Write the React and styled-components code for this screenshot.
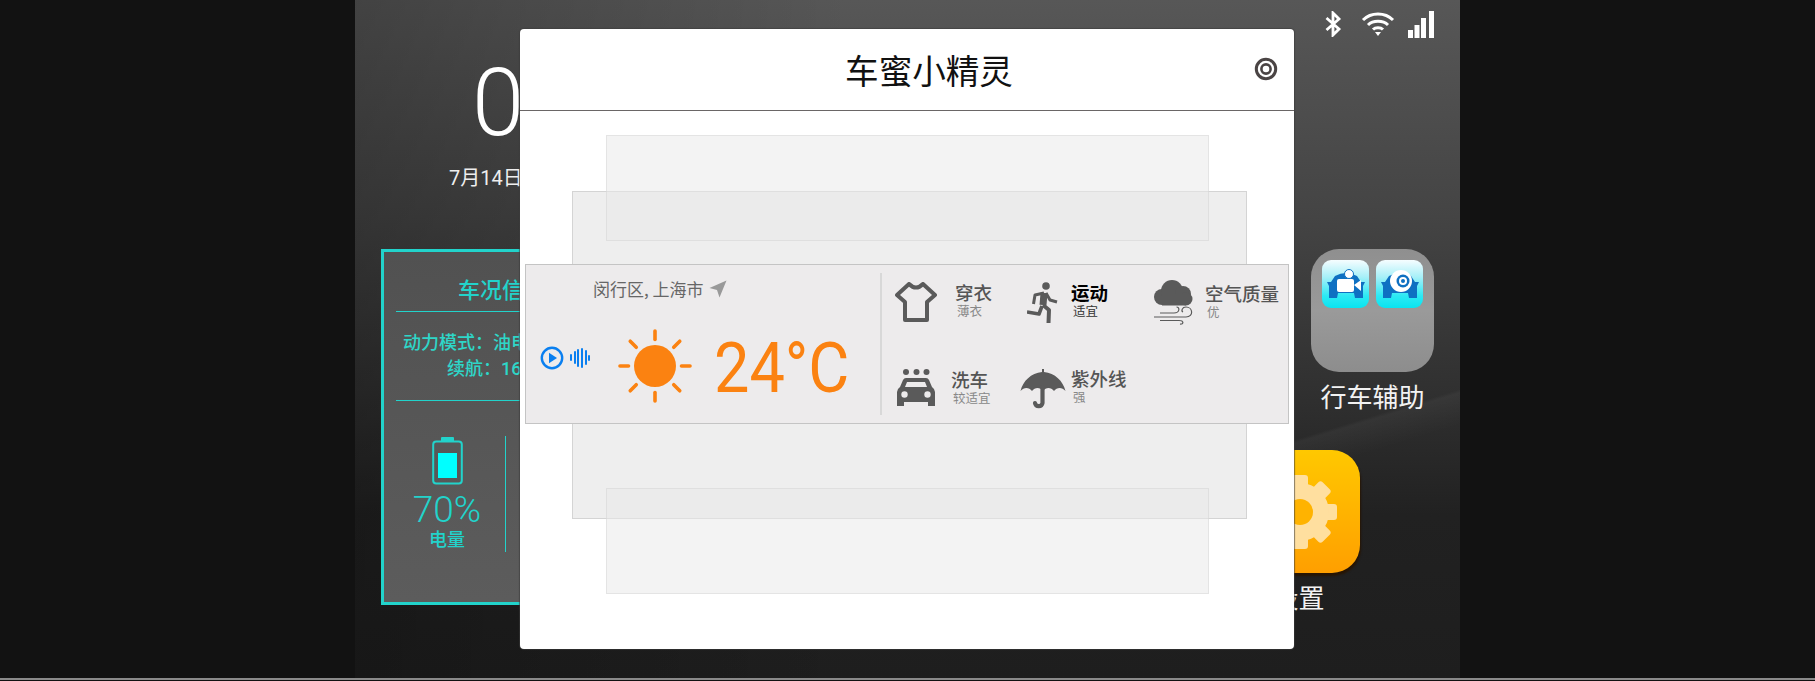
import React from 'react'
import styled, { createGlobalStyle } from 'styled-components'

const CJK = '"Noto Sans CJK SC", "Noto Sans", sans-serif'
const TEAL = '#22d3cb'
const ORANGE = '#fb8211'
const BLUE = '#0a7ff0'
const ICON_GRAY = '#5a5a5a'

const GlobalStyle = createGlobalStyle`
  html, body {
    margin: 0;
    height: 681px;
    overflow: hidden;
    background: #121212;
    font-family: Roboto, ${CJK};
  }
`

const Page = styled.div`
  width: 1815px;
  height: 681px;
  display: flex;
  flex-direction: column;
  align-items: center;
`

const BottomLine = styled.div`
  width: 100%;
  height: 2px;
  background: #8a8a8a;
`

const Phone = styled.div`
  position: relative;
  width: 1105px;
  height: 678px;
  flex-shrink: 0;
  display: flex;
  flex-direction: column;
  overflow: hidden;
  background:
    linear-gradient(163deg, transparent 50%, rgba(255, 255, 255, 0.04) 52%, transparent 70%) right 390px / 300px 90px no-repeat,
    linear-gradient(90deg, rgba(0, 0, 0, 0.24) 0, rgba(0, 0, 0, 0) 45%),
    linear-gradient(180deg, #575757 0, #444 32%, #303030 58%, #212121 76%, #1e1e1e 100%);
`

const StatusBar = styled.div`
  height: 45px;
  flex-shrink: 0;
  display: flex;
  justify-content: flex-end;
  align-items: flex-start;
  gap: 13px;
  padding: 11px 25px 0 0;
  box-sizing: border-box;
`

const Home = styled.div`
  flex: 1;
  display: flex;
  justify-content: space-between;
  padding: 0 26px 0 26px;
`

const LeftColumn = styled.div`
  display: flex;
  flex-direction: column;
  width: 300px;
`

const Clock = styled.div`
  margin: 5px 0 0 91px;
  font-size: 94px;
  line-height: 106px;
  font-weight: 300;
  color: #fff;
  white-space: nowrap;
`

const DateText = styled.div`
  margin: 9px 0 0 68px;
  font-size: 20px;
  line-height: 26px;
  color: #eee;
  white-space: nowrap;
`

const StatusPanel = styled.div`
  margin-top: 58px;
  width: 242px;
  height: 356px;
  box-sizing: border-box;
  border: 3px solid ${TEAL};
  background: linear-gradient(180deg, #515151 0, #5c5c5c 100%);
  color: ${TEAL};
  display: flex;
  flex-direction: column;
  padding: 0 12px;
`

const PanelTitle = styled.div`
  padding-top: 19px;
  font-size: 22px;
  line-height: 40px;
  font-weight: 500;
  text-align: center;
  border-bottom: 1.5px solid ${TEAL};
`

const PanelText = styled.div`
  padding-top: 18px;
  height: 70px;
  border-bottom: 1.5px solid ${TEAL};
  font-size: 18px;
  line-height: 26px;
  font-weight: 500;
  text-align: center;
  white-space: nowrap;
  color: #2ed6c8;
`

const Stats = styled.div`
  margin-top: 35px;
  display: flex;
`

const Stat = styled.div`
  width: 110px;
  height: 116px;
  box-sizing: border-box;
  padding-right: 7px;
  border-right: 1.5px solid ${TEAL};
  display: flex;
  flex-direction: column;
  align-items: center;
`

const StatValue = styled.div`
  margin-top: 7px;
  font-size: 37px;
  line-height: 36px;
  font-weight: 300;
`

const StatLabel = styled.div`
  font-size: 18px;
  line-height: 24px;
  font-weight: 500;
`

const RightColumn = styled.div`
  padding-top: 204px;
  display: flex;
  flex-direction: column;
  align-items: flex-end;
`

const AppCell = styled.div`
  width: 123px;
  margin-right: ${p => p.$shift || 0}px;
  margin-top: ${p => p.$top || 0}px;
  display: flex;
  flex-direction: column;
  align-items: center;
`

const AppLabel = styled.div`
  margin-top: 9px;
  font-size: 26px;
  line-height: 34px;
  color: #f2f2f2;
  white-space: nowrap;
`

const Folder = styled.div`
  width: 123px;
  height: 123px;
  box-sizing: border-box;
  padding: 11px;
  border-radius: 28px;
  background: linear-gradient(180deg, #8f8f8f 0, #9a9a9a 50%, #8d8d8d 100%);
  display: flex;
  gap: 7px;
  align-items: flex-start;
`

const MiniApp = styled.div`
  width: 47px;
  height: 48px;
  border-radius: 9px;
  background: linear-gradient(180deg, #f6fdff 0, #a8f0f8 35%, #2ce9f4 75%, #09e4f0 100%);
  display: flex;
  align-items: center;
  justify-content: center;
`

const SettingsIcon = styled.div`
  width: 123px;
  height: 123px;
  border-radius: 28px;
  background: linear-gradient(180deg, #ffc800 0, #ff9f00 100%);
  box-shadow: 1px 3px 2px rgba(40, 20, 0, 0.9);
  display: flex;
  align-items: center;
  justify-content: center;
  padding-left: 2px;
  box-sizing: border-box;
`

const Modal = styled.div`
  position: absolute;
  top: 29px;
  left: 165px;
  width: 774px;
  height: 620px;
  box-sizing: border-box;
  background: #fff;
  border-radius: 4px;
  box-shadow: 0 0 1px 1px rgba(60, 60, 60, 0.6);
  display: flex;
  flex-direction: column;
`

const ModalHeader = styled.div`
  height: 82px;
  flex-shrink: 0;
  box-sizing: border-box;
  padding-left: 44px;
  border-bottom: 1px solid #6a6666;
  display: flex;
  align-items: center;
  justify-content: center;
  position: relative;
`

const ModalTitle = styled.div`
  font-family: ${CJK};
  font-size: 33.6px;
  color: #111;
`

const HeaderAction = styled.div`
  position: absolute;
  right: 16px;
  top: 28px;
  display: flex;
`

const CardStack = styled.div`
  flex: 1;
  padding: 24px 0 55px;
  display: grid;
  grid-template: 1fr / 1fr;
`

const BackCard = styled.div`
  grid-area: 1 / 1;
  justify-self: center;
  align-self: start;
  width: 675px;
  height: 328px;
  margin: 56px 0 0 5px;
  box-sizing: border-box;
  background: #eeeeee;
  border: 1.5px solid #d4d4d4;
`

const GhostCard = styled.div`
  grid-area: 1 / 1;
  justify-self: center;
  align-self: ${p => p.$align};
  width: 603px;
  height: 106px;
  box-sizing: border-box;
  background: rgba(232, 232, 232, 0.53);
  border: 1.5px solid rgba(205, 205, 205, 0.4);
`

const WeatherCard = styled.div`
  grid-area: 1 / 1;
  justify-self: center;
  align-self: start;
  margin-top: 129px;
  width: 764px;
  height: 160px;
  box-sizing: border-box;
  background: #edebec;
  border: 1.5px solid #c4c4c4;
  display: flex;
  padding: 8px 0;
`

const NowPanel = styled.div`
  width: 356px;
  flex-shrink: 0;
  box-sizing: border-box;
  border-right: 2px solid #d8d8d8;
  display: flex;
  flex-direction: column;
`

const Location = styled.div`
  margin: 5px 0 0 67px;
  display: flex;
  align-items: center;
  gap: 5px;
  font-family: ${CJK};
  font-size: 17px;
  line-height: 22px;
  color: #666;
`

const NowRow = styled.div`
  margin-top: 14px;
  display: flex;
  align-items: center;
  padding-left: 14px;
`

const PlayGroup = styled.div`
  margin-bottom: 7px;
  display: flex;
  align-items: center;
`

const Waves = styled.div`
  margin-left: 6px;
  display: flex;
  align-items: center;
  gap: 1.7px;
`

const WaveBar = styled.span`
  width: 2px;
  border-radius: 1px;
  background: ${BLUE};
  height: ${p => p.$h}px;
`

const SunBox = styled.div`
  margin: 9px 0 0 28px;
  display: flex;
`

const Temperature = styled.div`
  margin: 14px 0 0 22px;
  font-size: 70px;
  line-height: 80px;
  font-weight: 400;
  color: ${ORANGE};
  white-space: nowrap;
  transform: scaleX(0.9);
  transform-origin: left center;
`

const IndexGrid = styled.div`
  flex: 1;
  display: grid;
  grid-template-columns: 127px 131px 1fr;
  grid-template-rows: 87px 1fr;
  padding: 7px 0 0 11px;
`

const IndexItem = styled.div`
  display: flex;
  align-items: flex-start;
  padding-left: ${p => p.$inset || 0}px;
  gap: ${p => p.$gap}px;
  padding-top: ${p => p.$top || 0}px;
`

const IndexText = styled.div`
  margin-top: ${p => p.$top || 0}px;
  font-family: ${CJK};
  display: flex;
  flex-direction: column;
`

const IndexName = styled.div`
  font-size: 18.5px;
  line-height: 22px;
  font-weight: ${p => (p.$active ? 700 : 500)};
  white-space: nowrap;
  color: ${p => (p.$active ? '#000' : '#555')};
`

const IndexValue = styled.div`
  margin: 1px 0 0 2px;
  font-size: 12.5px;
  line-height: 14px;
  white-space: nowrap;
  color: ${p => (p.$active ? '#333' : '#888')};
`

const Bluetooth = () => (
  <svg width="23" height="26" viewBox="0 0 23 26" fill="none" stroke="#fff" strokeWidth="2.8">
    <path d="M1.5 7 L14 18 L8 24 V2 L14 8 L1.5 19" />
  </svg>
)

const Wifi = () => (
  <svg width="34" height="26" viewBox="0 0 34 26" fill="none" stroke="#fff" strokeWidth="3">
    <path d="M2 9 C10 1 24 1 32 9" />
    <path d="M7 14 C12 9 22 9 27 14" />
    <path d="M12 18.5 C14.5 16 19.5 16 22 18.5" />
    <path d="M14 21 H20 L17 25 Z" fill="#fff" stroke="none" />
  </svg>
)

const Signal = () => (
  <svg width="27" height="28" viewBox="0 0 27 28" fill="#fff">
    <rect x="0" y="19" width="5" height="8" />
    <rect x="6.5" y="14" width="5" height="13" />
    <rect x="13" y="7" width="5" height="20" />
    <rect x="21" y="0" width="5" height="27" />
  </svg>
)

const Battery = () => (
  <svg width="31" height="49" viewBox="0 0 31 49" fill="none" style={{ flexShrink: 0 }}>
    <rect x="9" y="1" width="13" height="5" rx="1" fill={TEAL} />
    <rect x="1.2" y="5.5" width="28.6" height="42" rx="3" stroke={TEAL} strokeWidth="2" />
    <rect x="6" y="17" width="19" height="25" fill="#00ffff" />
  </svg>
)

const Gear = () => (
  <svg width="80" height="80" viewBox="-40 -40 80 80">
    {[0, 45, 90, 135, 180, 225, 270, 315].map(a => (
      <rect key={a} x="-8" y="-37" width="16" height="14" rx="3" fill="#ffdf9f" transform={`rotate(${a})`} />
    ))}
    <circle r="29" fill="#ffdf9f" />
    <circle r="13" fill="#ffb300" />
  </svg>
)

const CarShape = ({ children }) => (
  <svg width="42" height="38" viewBox="0 0 42 38">
    <path d="M2 17 L6 17 L10 11 Q21 5 32 11 L36 17 L40 17 L38 21 L38 33 L30 33 L29 28 L13 28 L12 33 L4 33 L4 21 Z" fill="#0e70c2" />
    {children}
  </svg>
)

const TargetIcon = () => (
  <svg width="24" height="24" viewBox="0 0 24 24" fill="none" stroke="#4a4444">
    <circle cx="12" cy="12" r="9.7" strokeWidth="3" />
    <circle cx="12" cy="12" r="4.6" strokeWidth="2.6" />
  </svg>
)

const NavArrow = () => (
  <svg width="18" height="18" viewBox="0 0 18 18" fill="#999">
    <path d="M17.5 0.5 L0.5 8 L8 10 L10.5 17.5 Z" />
  </svg>
)

const PlayIcon = () => (
  <svg width="24" height="24" viewBox="0 0 24 24" fill="none">
    <circle cx="12" cy="12" r="10.2" stroke={BLUE} strokeWidth="2.4" />
    <path d="M9 6.8 L17 12 L9 17.2 Z" fill={BLUE} />
  </svg>
)

const SunIcon = () => (
  <svg width="74" height="74" viewBox="-37 -37 74 74">
    <circle r="21" fill={ORANGE} />
    {[0, 45, 90, 135, 180, 225, 270, 315].map(a => (
      <line key={a} x1="0" y1="-26.5" x2="0" y2="-35" stroke={ORANGE} strokeWidth="3.6" strokeLinecap="round" transform={`rotate(${a})`} />
    ))}
  </svg>
)

const ShirtIcon = () => (
  <svg width="44" height="40" viewBox="0 0 44 40" fill="none" stroke={ICON_GRAY} strokeWidth="4" strokeLinejoin="round">
    <path d="M15 2 Q22 9 29 2 L41 13 L33 20 V38 H11 V20 L3 13 Z" />
  </svg>
)

const RunnerIcon = () => (
  <svg width="31" height="41" viewBox="0 0 31 41" fill="none" stroke={ICON_GRAY} strokeLinejoin="round">
    <circle cx="19" cy="4" r="3.8" fill={ICON_GRAY} stroke="none" />
    <path d="M17 11 L16 23" strokeWidth="7" />
    <path d="M16 23 L22 28 L21.5 41" strokeWidth="4" />
    <path d="M15 24 L12 32 L0 30" strokeWidth="3.6" />
    <path d="M17 11 L8 13 L6.5 22" strokeWidth="3" />
    <path d="M19 11 L23 18 L30 20" strokeWidth="3" />
  </svg>
)

const AirIcon = () => (
  <svg width="39" height="45" viewBox="0 0 39 45">
    <g fill={ICON_GRAY}>
      <circle cx="8" cy="17" r="8" />
      <circle cx="18" cy="11" r="11" />
      <circle cx="29" cy="14" r="8" />
      <circle cx="32" cy="19" r="6.5" />
      <rect x="8" y="14" width="24" height="11.5" />
    </g>
    <g fill="none" stroke={ICON_GRAY} strokeWidth="1.2">
      <path d="M6 33 H20 C26 33 26 27 22.5 27" />
      <path d="M0 37 H32 C40 37 39 27 32 27 C28 27 27 31 29 32" />
      <path d="M6 40.5 H25 C30 40.5 30 44.5 26 44" />
    </g>
  </svg>
)

const WashIcon = () => (
  <svg width="38" height="38" viewBox="0 0 38 38">
    <g fill={ICON_GRAY}>
      <circle cx="9" cy="3" r="3" />
      <circle cx="19.5" cy="3" r="3" />
      <circle cx="29.5" cy="3" r="3" />
      <path d="M9 9 H29 Q31 9 32 11 L35 18 Q38 20 38 23 V37 H31 V33 H7 V37 H0 V23 Q0 20 3 18 L6 11 Q7 9 9 9 Z" />
    </g>
    <path d="M10 13 H28 L30 18 H8 Z" fill="#edebec" />
    <circle cx="7.5" cy="25.5" r="3.2" fill="#edebec" />
    <circle cx="30.5" cy="25.5" r="3.2" fill="#edebec" />
  </svg>
)

const UmbrellaIcon = () => (
  <svg width="46" height="41" viewBox="0 0 46 41">
    <path d="M22 0 H24 V3 C35 4 43 12 45.5 22 C42 18 37 18 34 22 C31 18 26 18 23 22 C20 18 15 18 12 22 C9 18 4 18 0.5 22 C3 12 11 4 22 3 Z" fill={ICON_GRAY} />
    <path d="M22.5 18 V34 A3.8 3.8 0 0 1 15 34" fill="none" stroke={ICON_GRAY} strokeWidth="4.2" strokeLinecap="round" />
  </svg>
)

const waveHeights = [7, 13, 18, 20, 15, 6]

const indexes = [
  { name: '穿衣', value: '薄衣', icon: <ShirtIcon />, inset: 1, gap: 17, textTop: -1 },
  { name: '运动', value: '适宜', icon: <RunnerIcon />, inset: 7, gap: 13, textTop: -1, active: true },
  { name: '空气质量', value: '优', icon: <AirIcon />, inset: 3, gap: 12, textTop: 2, flush: true },
  { name: '洗车', value: '较适宜', icon: <WashIcon />, inset: 4, gap: 16, textTop: -1 },
  { name: '紫外线', value: '强', icon: <UmbrellaIcon />, gap: 5, textTop: -2 },
]

export default function App() {
  return (
    <Page>
      <GlobalStyle />
      <Phone>
        <StatusBar>
          <Bluetooth />
          <Wifi />
          <Signal />
        </StatusBar>
        <Home>
          <LeftColumn>
            <Clock>08:30</Clock>
            <DateText>7月14日 星期五</DateText>
            <StatusPanel>
              <PanelTitle>车况信息</PanelTitle>
              <PanelText>
                动力模式：油电混合模式
                <br />
                续航：160km
              </PanelText>
              <Stats>
                <Stat>
                  <Battery />
                  <StatValue>70%</StatValue>
                  <StatLabel>电量</StatLabel>
                </Stat>
              </Stats>
            </StatusPanel>
          </LeftColumn>
          <RightColumn>
            <AppCell>
              <Folder>
                <MiniApp>
                  <CarShape>
                    <rect x="12" y="14" width="17" height="13" rx="2" fill="#fff" />
                    <path d="M29 20 L36 15 V26 Z" fill="#fff" />
                    <circle cx="24" cy="9" r="4.5" fill="#fff" stroke="#0e70c2" />
                  </CarShape>
                </MiniApp>
                <MiniApp>
                  <CarShape>
                    <circle cx="22" cy="16" r="11" fill="#fff" />
                    <circle cx="24" cy="16" r="6.5" fill="#0e70c2" />
                    <circle cx="24" cy="16" r="4" fill="#fff" />
                    <circle cx="24" cy="16" r="2" fill="#0e70c2" />
                  </CarShape>
                </MiniApp>
              </Folder>
              <AppLabel>行车辅助</AppLabel>
            </AppCell>
            <AppCell $shift={74} $top={35}>
              <SettingsIcon>
                <Gear />
              </SettingsIcon>
              <AppLabel>设置</AppLabel>
            </AppCell>
          </RightColumn>
        </Home>
        <Modal>
          <ModalHeader>
            <ModalTitle>车蜜小精灵</ModalTitle>
            <HeaderAction>
              <TargetIcon />
            </HeaderAction>
          </ModalHeader>
          <CardStack>
            <BackCard />
            <GhostCard $align="start" />
            <GhostCard $align="end" />
            <WeatherCard>
              <NowPanel>
                <Location>
                  闵行区, 上海市
                  <NavArrow />
                </Location>
                <NowRow>
                  <PlayGroup>
                    <PlayIcon />
                    <Waves>
                      {waveHeights.map((h, i) => (
                        <WaveBar key={i} $h={h} />
                      ))}
                    </Waves>
                  </PlayGroup>
                  <SunBox>
                    <SunIcon />
                  </SunBox>
                  <Temperature>24°C</Temperature>
                </NowRow>
              </NowPanel>
              <IndexGrid>
                {indexes.map(item => (
                  <IndexItem key={item.name} $inset={item.inset} $gap={item.gap} $top={item.flush ? 0 : 2}>
                    {item.icon}
                    <IndexText $top={item.textTop}>
                      <IndexName $active={item.active}>{item.name}</IndexName>
                      <IndexValue $active={item.active}>{item.value}</IndexValue>
                    </IndexText>
                  </IndexItem>
                ))}
              </IndexGrid>
            </WeatherCard>
          </CardStack>
        </Modal>
      </Phone>
      <BottomLine />
    </Page>
  )
}
